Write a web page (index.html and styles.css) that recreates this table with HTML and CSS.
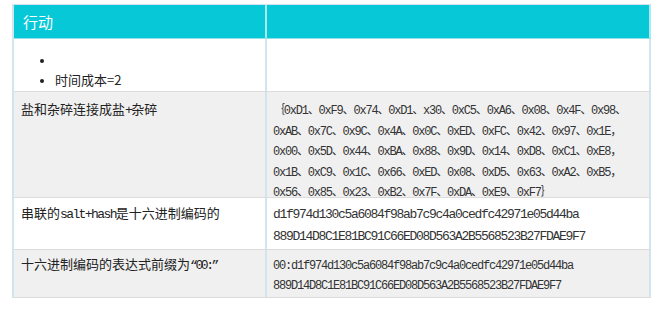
FILE: index.html
```html
<!DOCTYPE html>
<html lang="zh-CN">
<head>
<meta charset="utf-8">
<title>行动</title>
<link rel="stylesheet" href="styles.css">
</head>
<body>
<div class="table">
  <div class="row head">
    <div class="cell">行动</div>
    <div class="cell"></div>
  </div>
  <div class="row r1">
    <div class="cell">
      <ul class="list">
        <li></li>
        <li>时间成本=2</li>
      </ul>
    </div>
    <div class="cell"></div>
  </div>
  <div class="row r2 alt">
    <div class="cell label">盐和杂碎连接成盐<span class="en">+</span>杂碎</div>
    <div class="cell code">｛0xD1、0xF9、0x74、0xD1、x30、0xC5、0xA6、0x08、0x4F、0x98、<br>0xAB、0x7C、0x9C、0x4A、0x0C、0xED、0xFC、0x42、0x97、0x1E，<br>0x00、0x5D、0x44、0xBA、0x88、0x9D、0x14、0xD8、0xC1、0xE8，<br>0x1B、0xC9、0x1C、0x66、0xED、0x08、0xD5、0x63、0xA2、0xB5，<br>0x56、0x85、0x23、0xB2、0x7F、0xDA、0xE9、0xF7｝</div>
  </div>
  <div class="row r3">
    <div class="cell label">串联的<span class="en">salt+hash</span>是十六进制编码的</div>
    <div class="cell code">d1f974d130c5a6084f98ab7c9c4a0cedfc42971e05d44ba<br>889D14D8C1E81BC91C66ED08D563A2B5568523B27FDAE9F7</div>
  </div>
  <div class="row r4 alt">
    <div class="cell label">十六进制编码的表达式前缀为<span class="en q">“00:”</span></div>
    <div class="cell code">00:d1f974d130c5a6084f98ab7c9c4a0cedfc42971e05d44ba<br>889D14D8C1E81BC91C66ED08D563A2B5568523B27FDAE9F7</div>
  </div>
</div>
</body>
</html>
```

FILE: styles.css
```css
html, body {
  margin: 0;
  padding: 0;
  background: #ffffff;
}

body {
  padding: 4px 0 0 12px;
  font-family: "Noto Sans CJK SC", "Liberation Sans", sans-serif;
  color: #333333;
}

.table {
  width: 637px;
  border-left: 2px solid #d2e5ef;
  border-top: 1px solid #d2e5ef;
}

.row {
  display: grid;
  grid-template-columns: 253px 1fr;
  border-bottom: 1px solid #dcdcdc;
}

.cell {
  border-right: 2px solid #d2e5ef;
  white-space: nowrap;
}

.alt {
  background: #f0f0f0;
}

.head {
  background: #06c8d7;
  border-bottom: 1px solid #8fe2ea;
}

.head .cell {
  border-right-color: #a9e9ef;
  color: #ffffff;
  font-size: 15px;
  line-height: 33px;
  padding: 0 9px;
}

.r1 .cell {
  font-size: 13px;
  line-height: 20px;
  padding: 11px 8px 1px 7px;
  color: #222222;
}

.list {
  margin: 0;
  padding-left: 34px;
}

.list li::marker {
  font-size: 11px;
}

.label {
  font-family: "Liberation Mono", "Noto Sans CJK SC", monospace;
  font-size: 13px;
  padding-left: 7px;
  color: #222222;
}

.label .en {
  letter-spacing: -1.6px;
}

.label .q {
  letter-spacing: -2.4px;
}

.code {
  font-family: "Liberation Mono", "Noto Sans CJK SC", monospace;
  font-size: 12px;
  letter-spacing: -1.2px;
  padding-left: 6px;
  color: #333333;
}

.r2 {
  grid-template-rows: 105px;
}

.r2 .cell {
  line-height: 20.6px;
  padding-top: 9px;
}

.r3 .cell {
  line-height: 22px;
  padding-top: 6px;
  padding-bottom: 1px;
}

.r3 .code {
  font-size: 13px;
  letter-spacing: -1.3px;
}

.r4 .cell {
  line-height: 20px;
  padding-top: 6px;
  padding-bottom: 1px;
}
```
